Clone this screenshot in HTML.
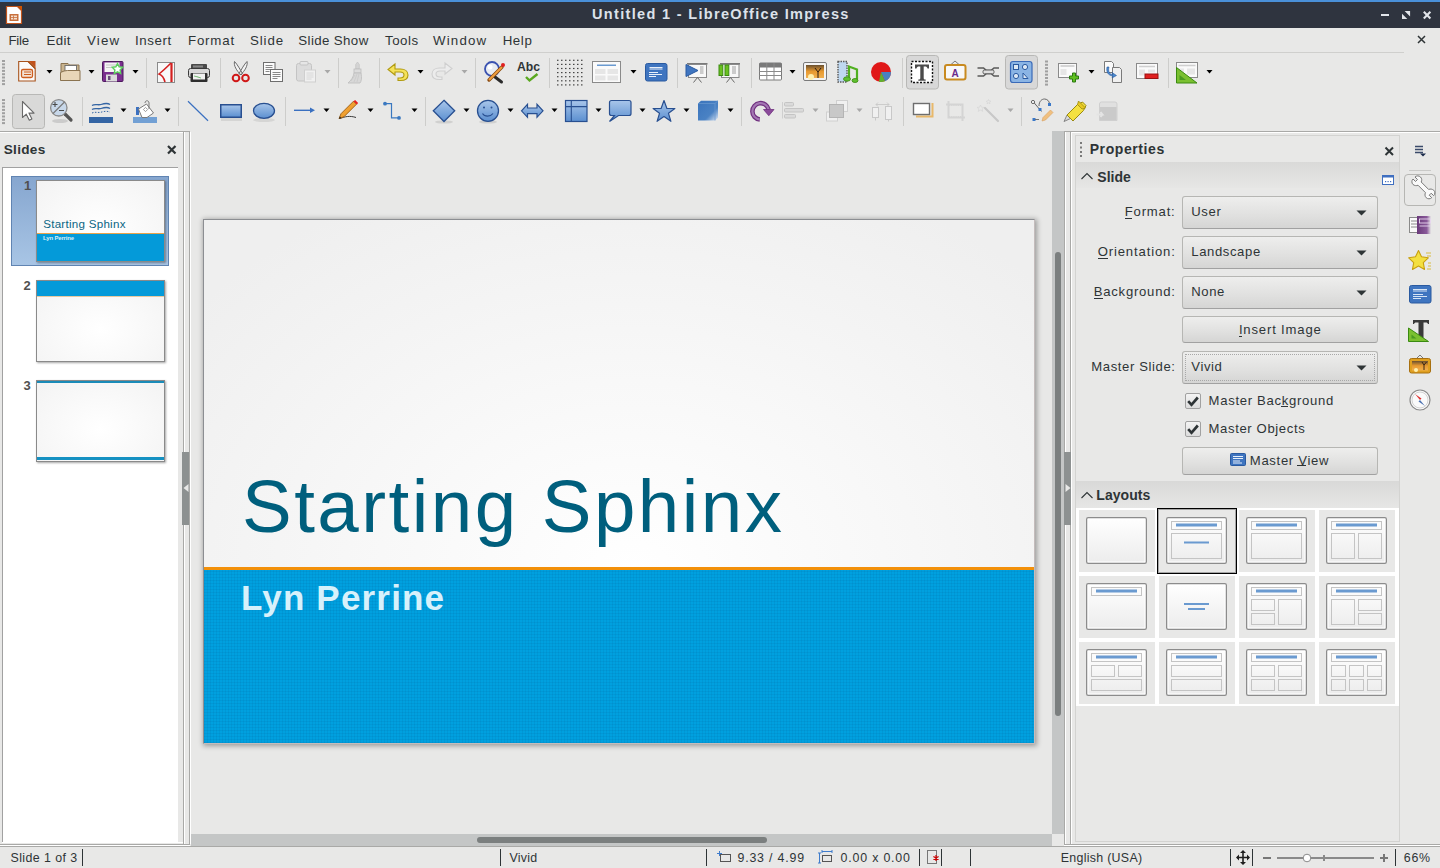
<!DOCTYPE html>
<html><head><meta charset="utf-8">
<style>
*{box-sizing:border-box;margin:0;padding:0}
html,body{width:1440px;height:868px;overflow:hidden;background:#e8e8e7;font-family:"Liberation Sans",sans-serif;color:#2e3436;position:relative}
.a{position:absolute}
.t{position:absolute;white-space:nowrap;line-height:1}
svg{position:absolute;overflow:visible}
</style></head><body>
<div class="a" style="left:0px;top:0px;width:1440px;height:2px;background:#4a90d9"></div>
<div class="a" style="left:0px;top:2px;width:1440px;height:26px;background:#2f343f"></div>
<svg style="left:0;top:0" width="30" height="30"><path d="M6.5 6.5h11l4 4v13h-15z" fill="#fff" stroke="#c1541c" stroke-width="1.2"/><path d="M17.5 6h4.5v4.5z" fill="#d35400"/><rect x="9.5" y="14" width="9" height="7" fill="#c8703d"/><rect x="11" y="15.5" width="6" height="4" fill="#f5e0d0"/><path d="M13.5 15.5v4M11 17.5h6" stroke="#c8703d" stroke-width=".8"/></svg>
<div class="t" style="left:592.00px;top:7.22px;font-size:14.5px;font-weight:bold;color:#dde2ea;letter-spacing:1.33px">Untitled 1 - LibreOffice Impress</div>
<svg style="left:0;top:0" width="1440" height="30">
<rect x="1381" y="14" width="8" height="2" fill="#e2e5ea"/>
<path d="M1404.6 11h5.5v5.5z M1402 13.8l5.3 5.2h-5.3z" fill="#e2e5ea"/>
<path d="M1423.8 11.8l6.6 6.6M1430.4 11.8l-6.6 6.6" stroke="#e2e5ea" stroke-width="2.1"/>
</svg>
<div class="t" style="left:8.50px;top:33.74px;font-size:13.3px;letter-spacing:-0.29px">File</div>
<div class="t" style="left:46.50px;top:33.74px;font-size:13.3px;letter-spacing:0.38px">Edit</div>
<div class="t" style="left:87.00px;top:33.74px;font-size:13.3px;letter-spacing:1.17px">View</div>
<div class="t" style="left:135.00px;top:33.74px;font-size:13.3px;letter-spacing:0.57px">Insert</div>
<div class="t" style="left:188.00px;top:33.74px;font-size:13.3px;letter-spacing:0.80px">Format</div>
<div class="t" style="left:250.00px;top:33.74px;font-size:13.3px;letter-spacing:0.88px">Slide</div>
<div class="t" style="left:298.30px;top:33.74px;font-size:13.3px;letter-spacing:0.38px">Slide Show</div>
<div class="t" style="left:385.00px;top:33.74px;font-size:13.3px;letter-spacing:0.53px">Tools</div>
<div class="t" style="left:433.00px;top:33.74px;font-size:13.3px;letter-spacing:1.18px">Window</div>
<div class="t" style="left:502.70px;top:33.74px;font-size:13.3px;letter-spacing:0.58px">Help</div>
<svg style="left:1415px;top:33px" width="14" height="14"><path d="M3 3l7 7M10 3l-7 7" stroke="#2e3436" stroke-width="1.5"/></svg>
<div class="a" style="left:0px;top:52px;width:1404px;height:1px;background:#cfcfcd"></div>
<div class="a" style="left:0px;top:131px;width:190px;height:1px;background:#a9a9a7"></div>
<div class="a" style="left:0px;top:132px;width:183px;height:1px;background:#ffffff"></div>
<div class="a" style="left:1064px;top:131px;width:1375px;height:1px;background:#a9a9a7"></div>
<div class="a" style="left:1071px;top:132px;width:1368px;height:1px;background:#ffffff"></div>
<div class="t" style="left:3.70px;top:142.99px;font-size:13.6px;font-weight:bold;letter-spacing:0.31px">Slides</div>
<svg style="left:163.5px;top:141.5px" width="16" height="16"><path d="M4 4l7.5 7.5M11.5 4l-7.5 7.5" stroke="#2e3436" stroke-width="2.2"/></svg>
<div class="a" style="left:2px;top:167px;width:176px;height:675px;background:#fff;border-top:1px solid #a1a1a1;border-left:1px solid #a1a1a1"></div>
<div class="a" style="left:2px;top:842px;width:182px;height:1px;background:#ffffff"></div>
<div class="a" style="left:0px;top:844px;width:190px;height:1px;background:#a9a9a7"></div>
<div class="a" style="left:183px;top:131px;width:1px;height:714px;background:#a9a9a7"></div>
<div class="a" style="left:189px;top:131px;width:1px;height:714px;background:#a9a9a7"></div>
<div class="a" style="left:184px;top:132px;width:1px;height:712px;background:#fff"></div>
<div class="a" style="left:190px;top:132px;width:1px;height:712px;background:#fff"></div>
<div class="a" style="left:182px;top:452px;width:7px;height:73px;background:#8d9191"></div>
<svg style="left:182px;top:482px" width="8" height="12"><path d="M1.5 6l5-4v8z" fill="#e8e8e7"/></svg>
<div class="a" style="left:11px;top:176px;width:158px;height:90px;background:linear-gradient(to bottom,#86a6cf,#a8c5e5);border:1px solid #6084b2"></div>
<div class="a" style="left:36px;top:180px;width:129px;height:82px;border:1px solid #8a8a8a;box-shadow:1px 1px 2px rgba(0,0,0,.35);background:radial-gradient(ellipse at 50% 60%,#ffffff,#f3f3f3);overflow:hidden">
<div class="a" style="left:0;top:52px;width:127px;height:1px;background:#e8a34a"></div>
<div class="a" style="left:0;top:53px;width:127px;height:27px;background:#049ad9"></div>
</div>
<div class="a" style="left:36px;top:280px;width:129px;height:82px;border:1px solid #8a8a8a;box-shadow:1px 1px 2px rgba(0,0,0,.35);background:radial-gradient(ellipse at 50% 60%,#ffffff,#f3f3f3);overflow:hidden">
<div class="a" style="left:0;top:0;width:127px;height:15px;background:#049ad9"></div>
<div class="a" style="left:0;top:15px;width:127px;height:1px;background:#e8c9a0"></div>
</div>
<div class="a" style="left:36px;top:380px;width:129px;height:82px;border:1px solid #8a8a8a;box-shadow:1px 1px 2px rgba(0,0,0,.35);background:radial-gradient(ellipse at 50% 60%,#ffffff,#f3f3f3);overflow:hidden">
<div class="a" style="left:0;top:0;width:127px;height:2px;background:#1a8bb8"></div>
<div class="a" style="left:0;top:76px;width:127px;height:3px;background:#1591c2"></div>
</div>
<div class="t" style="left:43.20px;top:218.18px;font-size:11.6px;color:#0a6584;letter-spacing:0.26px">Starting Sphinx</div>
<div class="t" style="left:43.00px;top:234.92px;font-size:6px;font-weight:bold;color:#d8f0fa;letter-spacing:-0.17px">Lyn Perrine</div>
<div class="t" style="left:24.00px;top:179.49px;font-size:13px;font-weight:bold;color:#505050">1</div>
<div class="t" style="left:23.50px;top:279.49px;font-size:13px;font-weight:bold;color:#505050">2</div>
<div class="t" style="left:23.50px;top:379.49px;font-size:13px;font-weight:bold;color:#505050">3</div>
<div class="a" style="left:203px;top:219px;width:832px;height:525px;border:1px solid #8c8e92;border-right-color:#c4bcbc;border-bottom-color:#c4bcbc;box-shadow:1px 1px 5px 1px rgba(0,0,0,.33);background:radial-gradient(ellipse 560px 420px at 428px 350px,#ffffff 0%,#f8f8f8 45%,#efefef 100%);overflow:hidden">
<div class="a" style="left:0;top:347px;width:830px;height:3px;background:#f2900a"></div>
<div class="a" style="left:0;top:350px;width:830px;height:173px;background:#00a0df;background-image:repeating-linear-gradient(90deg,rgba(0,50,100,.07) 0 1px,transparent 1px 3px),repeating-linear-gradient(0deg,rgba(0,50,100,.07) 0 1px,transparent 1px 3px)"></div>
</div>
<div class="t" style="left:242.00px;top:469.53px;font-size:74.5px;color:#005f7d;letter-spacing:2.48px">Starting Sphinx</div>
<div class="t" style="left:241.00px;top:579.97px;font-size:35px;font-weight:bold;color:#d7f1fb;letter-spacing:1.18px">Lyn Perrine</div>
<div class="a" style="left:191px;top:834px;width:861px;height:12px;background:#c4c6c6"></div>
<div class="a" style="left:477px;top:837px;width:290px;height:6px;background:#7b7f7f;border-radius:3px"></div>
<div class="a" style="left:1052px;top:834px;width:12px;height:12px;background:#e8e8e7"></div>
<div class="a" style="left:0px;top:846px;width:1440px;height:1px;background:#a9a9a7"></div>
<div class="a" style="left:1052px;top:131px;width:12px;height:703px;background:#c4c6c6"></div>
<div class="a" style="left:1055px;top:252px;width:6px;height:464px;background:#7b7f7f;border-radius:3px"></div>
<div class="a" style="left:1064px;top:131px;width:1px;height:714px;background:#a9a9a7"></div>
<div class="a" style="left:1070px;top:131px;width:1px;height:714px;background:#a9a9a7"></div>
<div class="a" style="left:1065px;top:132px;width:1px;height:712px;background:#fff"></div>
<div class="a" style="left:1064px;top:452px;width:7px;height:73px;background:#8d9191"></div>
<svg style="left:1064px;top:482px" width="8" height="12"><path d="M6.5 6l-5-4v8z" fill="#e8e8e7"/></svg>
<div class="a" style="left:1071px;top:132px;width:1px;height:712px;background:#fff"></div>
<div class="a" style="left:1064px;top:844px;width:376px;height:1px;background:#a9a9a7"></div>
<div class="a" style="left:1064px;top:845px;width:376px;height:1px;background:#ffffff"></div>
<div class="a" style="left:0px;top:845px;width:190px;height:1px;background:#ffffff"></div>
<div class="a" style="left:1075px;top:135px;width:325px;height:707px;border:1px solid #d3d3d1;border-bottom:1px solid #d3d3d1"></div>
<svg style="left:1079px;top:141px" width="6" height="18"><g fill="#7a7a7a"><rect x="1" y="1" width="2" height="2"/><rect x="1" y="5.5" width="2" height="2"/><rect x="1" y="10" width="2" height="2"/><rect x="1" y="14" width="2" height="2"/></g></svg>
<div class="t" style="left:1089.70px;top:142.35px;font-size:14px;font-weight:bold;letter-spacing:0.59px">Properties</div>
<svg style="left:1382px;top:144px" width="16" height="16"><path d="M3.5 3.5l7.5 7.5M11 3.5l-7.5 7.5" stroke="#2e3436" stroke-width="2"/></svg>
<div class="a" style="left:1076px;top:162px;width:323px;height:26px;background:linear-gradient(to bottom,#d9d9d8,#e6e6e5)"></div>
<svg style="left:1078.5px;top:167.5px" width="18" height="18"><path d="M2.5 11l5.5-5.5 5.5 5.5" fill="none" stroke="#2e3436" stroke-width="1.1"/></svg>
<div class="t" style="left:1097.30px;top:169.75px;font-size:14px;font-weight:bold">Slide</div>
<svg style="left:1382px;top:175px" width="14" height="11"><rect x=".5" y=".5" width="11" height="9" fill="#fff" stroke="#3f6fc0"/><rect x=".5" y=".5" width="11" height="2" fill="#3f6fc0"/><g fill="#3f6fc0"><rect x="3" y="6" width="1.2" height="1.2"/><rect x="5.5" y="6" width="1.2" height="1.2"/><rect x="8" y="6" width="1.2" height="1.2"/></g></svg>
<div class="a" style="left:1182px;top:196px;width:196px;height:33px;border:1px solid #b6b6b3;border-bottom-color:#a1a1a1;border-radius:3px;background:linear-gradient(to bottom,#eeeeed,#e0e0df 60%,#d5d5d4)"></div>
<div class="t" style="left:1191.30px;top:205.41px;font-size:13.1px;letter-spacing:0.60px">User</div>
<svg style="left:1356px;top:210px" width="12" height="6"><path d="M0.5 .5h10l-5 5z" fill="#2e3436"/></svg>
<div class="t" style="left:1124.80px;top:204.81px;font-size:13.1px;letter-spacing:0.81px">Format:</div>
<div class="a" style="left:1182px;top:236px;width:196px;height:33px;border:1px solid #b6b6b3;border-bottom-color:#a1a1a1;border-radius:3px;background:linear-gradient(to bottom,#eeeeed,#e0e0df 60%,#d5d5d4)"></div>
<div class="t" style="left:1191.30px;top:245.41px;font-size:13.1px;letter-spacing:0.60px">Landscape</div>
<svg style="left:1356px;top:250px" width="12" height="6"><path d="M0.5 .5h10l-5 5z" fill="#2e3436"/></svg>
<div class="t" style="left:1097.70px;top:244.81px;font-size:13.1px;letter-spacing:0.86px">Orientation:</div>
<div class="a" style="left:1182px;top:276px;width:196px;height:33px;border:1px solid #b6b6b3;border-bottom-color:#a1a1a1;border-radius:3px;background:linear-gradient(to bottom,#eeeeed,#e0e0df 60%,#d5d5d4)"></div>
<div class="t" style="left:1191.30px;top:285.41px;font-size:13.1px;letter-spacing:0.60px">None</div>
<svg style="left:1356px;top:290px" width="12" height="6"><path d="M0.5 .5h10l-5 5z" fill="#2e3436"/></svg>
<div class="t" style="left:1093.70px;top:284.81px;font-size:13.1px;letter-spacing:0.77px">Background:</div>
<div class="a" style="left:1182px;top:316px;width:196px;height:27px;border:1px solid #b6b6b3;border-bottom-color:#a1a1a1;border-radius:3px;background:linear-gradient(to bottom,#eeeeed,#e0e0df 60%,#d5d5d4)"></div>
<div class="t" style="left:1238.90px;top:322.91px;font-size:13.1px;letter-spacing:0.83px">Insert Image</div>
<div class="a" style="left:1182px;top:351px;width:196px;height:33px;border:1px solid #b6b6b3;border-bottom-color:#a1a1a1;border-radius:3px;background:linear-gradient(to bottom,#eeeeed,#e0e0df 60%,#d5d5d4)"></div>
<div class="a" style="left:1185px;top:354px;width:190px;height:27px;border:1px dotted #a8a8a8"></div>
<div class="t" style="left:1191.30px;top:360.41px;font-size:13.1px;letter-spacing:0.60px">Vivid</div>
<svg style="left:1356px;top:365px" width="12" height="6"><path d="M0.5 .5h10l-5 5z" fill="#2e3436"/></svg>
<div class="t" style="left:1091.30px;top:359.71px;font-size:13.1px;letter-spacing:0.60px">Master Slide:</div>
<div class="a" style="left:1185px;top:393px;width:16px;height:16px;border:1px solid #a1a1a1;border-radius:2px;background:linear-gradient(to bottom,#f4f4f4,#dcdcdc)"></div>
<svg style="left:1185px;top:393px" width="16" height="16"><path d="M3.2 8.2l3.3 3.6 6.3-7.3" fill="none" stroke="#2e3436" stroke-width="2.7"/></svg>
<div class="t" style="left:1208.60px;top:394.41px;font-size:13.1px;letter-spacing:0.69px">Master Background</div>
<div class="a" style="left:1185px;top:421px;width:16px;height:16px;border:1px solid #a1a1a1;border-radius:2px;background:linear-gradient(to bottom,#f4f4f4,#dcdcdc)"></div>
<svg style="left:1185px;top:421px" width="16" height="16"><path d="M3.2 8.2l3.3 3.6 6.3-7.3" fill="none" stroke="#2e3436" stroke-width="2.7"/></svg>
<div class="t" style="left:1208.60px;top:422.41px;font-size:13.1px;letter-spacing:0.62px">Master Objects</div>
<div class="a" style="left:1182px;top:447px;width:196px;height:28px;border:1px solid #b6b6b3;border-bottom-color:#a1a1a1;border-radius:3px;background:linear-gradient(to bottom,#eeeeed,#e0e0df 60%,#d5d5d4)"></div>
<svg style="left:1230px;top:453px" width="17" height="14"><rect x=".5" y=".5" width="15" height="12" rx="1" fill="#3f75c0" stroke="#2a5aa0"/><path d="M3 3.5h10M3 5.5h10M3 8h7M3 10h9" stroke="#e8f0fa" stroke-width="1"/></svg>
<div class="t" style="left:1249.80px;top:453.91px;font-size:13.1px;letter-spacing:0.68px">Master View</div>
<div class="a" style="left:1076px;top:481px;width:323px;height:27px;background:linear-gradient(to bottom,#d9d9d8,#e6e6e5)"></div>
<svg style="left:1078.5px;top:486.5px" width="18" height="18"><path d="M2.5 11l5.5-5.5 5.5 5.5" fill="none" stroke="#2e3436" stroke-width="1.1"/></svg>
<div class="t" style="left:1096.30px;top:487.85px;font-size:14px;font-weight:bold;letter-spacing:0.05px">Layouts</div>
<div class="a" style="left:1076px;top:508px;width:323px;height:198px;background:#ffffff"></div>
<div class="a" style="left:1079px;top:510px;width:76px;height:62px;background:#e8e8e7"></div>
<svg style="left:1086px;top:517px" width="62" height="48"><defs><linearGradient id="g" x1="0" y1="0" x2="0" y2="1"><stop offset="0" stop-color="#ffffff"/><stop offset="1" stop-color="#ececec"/></linearGradient></defs><rect x=".75" y=".75" width="59.5" height="45.5" rx="1.5" fill="url(#g)" stroke="#8c8c8c" stroke-width="1.5"/><rect x="2" y="2" width="57" height="43" fill="none" stroke="#fff" stroke-width="1"/></svg>
<div class="a" style="left:1159px;top:510px;width:76px;height:62px;background:#e8e8e7"></div>
<svg style="left:1166px;top:517px" width="62" height="48"><defs><linearGradient id="g" x1="0" y1="0" x2="0" y2="1"><stop offset="0" stop-color="#ffffff"/><stop offset="1" stop-color="#ececec"/></linearGradient></defs><rect x=".75" y=".75" width="59.5" height="45.5" rx="1.5" fill="url(#g)" stroke="#8c8c8c" stroke-width="1.5"/><rect x="2" y="2" width="57" height="43" fill="none" stroke="#fff" stroke-width="1"/><rect x="5.5" y="4.5" width="50" height="8" fill="#fbfbfb" stroke="#c4c4c4"/><rect x="10" y="6.5" width="41" height="3" fill="#6a9ad0"/><rect x="5.5" y="16.5" width="50" height="25" fill="none" stroke="#c4c4c4"/><rect x="18" y="24.5" width="25" height="2" fill="#6a9ad0"/></svg>
<div class="a" style="left:1239px;top:510px;width:76px;height:62px;background:#e8e8e7"></div>
<svg style="left:1246px;top:517px" width="62" height="48"><defs><linearGradient id="g" x1="0" y1="0" x2="0" y2="1"><stop offset="0" stop-color="#ffffff"/><stop offset="1" stop-color="#ececec"/></linearGradient></defs><rect x=".75" y=".75" width="59.5" height="45.5" rx="1.5" fill="url(#g)" stroke="#8c8c8c" stroke-width="1.5"/><rect x="2" y="2" width="57" height="43" fill="none" stroke="#fff" stroke-width="1"/><rect x="5.5" y="4.5" width="50" height="8" fill="#fbfbfb" stroke="#c4c4c4"/><rect x="10" y="6.5" width="41" height="3" fill="#6a9ad0"/><rect x="5.5" y="16.5" width="50" height="25" fill="none" stroke="#c4c4c4"/></svg>
<div class="a" style="left:1319px;top:510px;width:76px;height:62px;background:#e8e8e7"></div>
<svg style="left:1326px;top:517px" width="62" height="48"><defs><linearGradient id="g" x1="0" y1="0" x2="0" y2="1"><stop offset="0" stop-color="#ffffff"/><stop offset="1" stop-color="#ececec"/></linearGradient></defs><rect x=".75" y=".75" width="59.5" height="45.5" rx="1.5" fill="url(#g)" stroke="#8c8c8c" stroke-width="1.5"/><rect x="2" y="2" width="57" height="43" fill="none" stroke="#fff" stroke-width="1"/><rect x="5.5" y="4.5" width="50" height="8" fill="#fbfbfb" stroke="#c4c4c4"/><rect x="10" y="6.5" width="41" height="3" fill="#6a9ad0"/><rect x="5.5" y="16.5" width="23" height="25" fill="none" stroke="#c4c4c4"/><rect x="32.5" y="16.5" width="23" height="25" fill="none" stroke="#c4c4c4"/></svg>
<div class="a" style="left:1079px;top:576px;width:76px;height:62px;background:#e8e8e7"></div>
<svg style="left:1086px;top:583px" width="62" height="48"><defs><linearGradient id="g" x1="0" y1="0" x2="0" y2="1"><stop offset="0" stop-color="#ffffff"/><stop offset="1" stop-color="#ececec"/></linearGradient></defs><rect x=".75" y=".75" width="59.5" height="45.5" rx="1.5" fill="url(#g)" stroke="#8c8c8c" stroke-width="1.5"/><rect x="2" y="2" width="57" height="43" fill="none" stroke="#fff" stroke-width="1"/><rect x="5.5" y="4.5" width="50" height="8" fill="#fbfbfb" stroke="#c4c4c4"/><rect x="10" y="6.5" width="41" height="3" fill="#6a9ad0"/></svg>
<div class="a" style="left:1159px;top:576px;width:76px;height:62px;background:#e8e8e7"></div>
<svg style="left:1166px;top:583px" width="62" height="48"><defs><linearGradient id="g" x1="0" y1="0" x2="0" y2="1"><stop offset="0" stop-color="#ffffff"/><stop offset="1" stop-color="#ececec"/></linearGradient></defs><rect x=".75" y=".75" width="59.5" height="45.5" rx="1.5" fill="url(#g)" stroke="#8c8c8c" stroke-width="1.5"/><rect x="2" y="2" width="57" height="43" fill="none" stroke="#fff" stroke-width="1"/><rect x="18" y="20" width="25" height="2" fill="#6a9ad0"/><rect x="22" y="25" width="17" height="2" fill="#6a9ad0"/></svg>
<div class="a" style="left:1239px;top:576px;width:76px;height:62px;background:#e8e8e7"></div>
<svg style="left:1246px;top:583px" width="62" height="48"><defs><linearGradient id="g" x1="0" y1="0" x2="0" y2="1"><stop offset="0" stop-color="#ffffff"/><stop offset="1" stop-color="#ececec"/></linearGradient></defs><rect x=".75" y=".75" width="59.5" height="45.5" rx="1.5" fill="url(#g)" stroke="#8c8c8c" stroke-width="1.5"/><rect x="2" y="2" width="57" height="43" fill="none" stroke="#fff" stroke-width="1"/><rect x="5.5" y="4.5" width="50" height="8" fill="#fbfbfb" stroke="#c4c4c4"/><rect x="10" y="6.5" width="41" height="3" fill="#6a9ad0"/><rect x="5.5" y="16.5" width="23" height="11" fill="none" stroke="#c4c4c4"/><rect x="5.5" y="30.5" width="23" height="11" fill="none" stroke="#c4c4c4"/><rect x="32.5" y="16.5" width="23" height="25" fill="none" stroke="#c4c4c4"/></svg>
<div class="a" style="left:1319px;top:576px;width:76px;height:62px;background:#e8e8e7"></div>
<svg style="left:1326px;top:583px" width="62" height="48"><defs><linearGradient id="g" x1="0" y1="0" x2="0" y2="1"><stop offset="0" stop-color="#ffffff"/><stop offset="1" stop-color="#ececec"/></linearGradient></defs><rect x=".75" y=".75" width="59.5" height="45.5" rx="1.5" fill="url(#g)" stroke="#8c8c8c" stroke-width="1.5"/><rect x="2" y="2" width="57" height="43" fill="none" stroke="#fff" stroke-width="1"/><rect x="5.5" y="4.5" width="50" height="8" fill="#fbfbfb" stroke="#c4c4c4"/><rect x="10" y="6.5" width="41" height="3" fill="#6a9ad0"/><rect x="5.5" y="16.5" width="23" height="25" fill="none" stroke="#c4c4c4"/><rect x="32.5" y="16.5" width="23" height="11" fill="none" stroke="#c4c4c4"/><rect x="32.5" y="30.5" width="23" height="11" fill="none" stroke="#c4c4c4"/></svg>
<div class="a" style="left:1079px;top:642px;width:76px;height:62px;background:#e8e8e7"></div>
<svg style="left:1086px;top:649px" width="62" height="48"><defs><linearGradient id="g" x1="0" y1="0" x2="0" y2="1"><stop offset="0" stop-color="#ffffff"/><stop offset="1" stop-color="#ececec"/></linearGradient></defs><rect x=".75" y=".75" width="59.5" height="45.5" rx="1.5" fill="url(#g)" stroke="#8c8c8c" stroke-width="1.5"/><rect x="2" y="2" width="57" height="43" fill="none" stroke="#fff" stroke-width="1"/><rect x="5.5" y="4.5" width="50" height="8" fill="#fbfbfb" stroke="#c4c4c4"/><rect x="10" y="6.5" width="41" height="3" fill="#6a9ad0"/><rect x="5.5" y="16.5" width="23" height="11" fill="none" stroke="#c4c4c4"/><rect x="32.5" y="16.5" width="23" height="11" fill="none" stroke="#c4c4c4"/><rect x="5.5" y="30.5" width="50" height="11" fill="none" stroke="#c4c4c4"/></svg>
<div class="a" style="left:1159px;top:642px;width:76px;height:62px;background:#e8e8e7"></div>
<svg style="left:1166px;top:649px" width="62" height="48"><defs><linearGradient id="g" x1="0" y1="0" x2="0" y2="1"><stop offset="0" stop-color="#ffffff"/><stop offset="1" stop-color="#ececec"/></linearGradient></defs><rect x=".75" y=".75" width="59.5" height="45.5" rx="1.5" fill="url(#g)" stroke="#8c8c8c" stroke-width="1.5"/><rect x="2" y="2" width="57" height="43" fill="none" stroke="#fff" stroke-width="1"/><rect x="5.5" y="4.5" width="50" height="8" fill="#fbfbfb" stroke="#c4c4c4"/><rect x="10" y="6.5" width="41" height="3" fill="#6a9ad0"/><rect x="5.5" y="16.5" width="50" height="11" fill="none" stroke="#c4c4c4"/><rect x="5.5" y="30.5" width="50" height="11" fill="none" stroke="#c4c4c4"/></svg>
<div class="a" style="left:1239px;top:642px;width:76px;height:62px;background:#e8e8e7"></div>
<svg style="left:1246px;top:649px" width="62" height="48"><defs><linearGradient id="g" x1="0" y1="0" x2="0" y2="1"><stop offset="0" stop-color="#ffffff"/><stop offset="1" stop-color="#ececec"/></linearGradient></defs><rect x=".75" y=".75" width="59.5" height="45.5" rx="1.5" fill="url(#g)" stroke="#8c8c8c" stroke-width="1.5"/><rect x="2" y="2" width="57" height="43" fill="none" stroke="#fff" stroke-width="1"/><rect x="5.5" y="4.5" width="50" height="8" fill="#fbfbfb" stroke="#c4c4c4"/><rect x="10" y="6.5" width="41" height="3" fill="#6a9ad0"/><rect x="5.5" y="16.5" width="23" height="11" fill="none" stroke="#c4c4c4"/><rect x="32.5" y="16.5" width="23" height="11" fill="none" stroke="#c4c4c4"/><rect x="5.5" y="30.5" width="23" height="11" fill="none" stroke="#c4c4c4"/><rect x="32.5" y="30.5" width="23" height="11" fill="none" stroke="#c4c4c4"/></svg>
<div class="a" style="left:1319px;top:642px;width:76px;height:62px;background:#e8e8e7"></div>
<svg style="left:1326px;top:649px" width="62" height="48"><defs><linearGradient id="g" x1="0" y1="0" x2="0" y2="1"><stop offset="0" stop-color="#ffffff"/><stop offset="1" stop-color="#ececec"/></linearGradient></defs><rect x=".75" y=".75" width="59.5" height="45.5" rx="1.5" fill="url(#g)" stroke="#8c8c8c" stroke-width="1.5"/><rect x="2" y="2" width="57" height="43" fill="none" stroke="#fff" stroke-width="1"/><rect x="5.5" y="4.5" width="50" height="8" fill="#fbfbfb" stroke="#c4c4c4"/><rect x="10" y="6.5" width="41" height="3" fill="#6a9ad0"/><rect x="5.5" y="16.5" width="14" height="11" fill="none" stroke="#c4c4c4"/><rect x="23.5" y="16.5" width="14" height="11" fill="none" stroke="#c4c4c4"/><rect x="41.5" y="16.5" width="14" height="11" fill="none" stroke="#c4c4c4"/><rect x="5.5" y="30.5" width="14" height="11" fill="none" stroke="#c4c4c4"/><rect x="23.5" y="30.5" width="14" height="11" fill="none" stroke="#c4c4c4"/><rect x="41.5" y="30.5" width="14" height="11" fill="none" stroke="#c4c4c4"/></svg>
<div class="a" style="left:1157px;top:508px;width:80px;height:66px;border:1px solid #000;box-shadow:inset 0 0 0 1px rgba(0,0,0,.35)"></div>
<svg style="left:1413px;top:144px" width="16" height="14"><path d="M2 2.5h8M2 5.5h8M2 8.5h8" stroke="#3a4a6a" stroke-width="1.3"/><path d="M7 9.5h6l-3 3z" fill="#1a2a4a"/></svg>
<div class="a" style="left:1409px;top:170px;width:22px;height:1px;background:#c9c9c7"></div>
<div class="a" style="left:1404px;top:174px;width:32px;height:32px;border:1px solid #b6b6b3;border-radius:4px;background:#e8e8e7"></div>
<div class="a" style="left:1125px;top:218px;width:7px;height:1px;background:#2e3436"></div>
<div class="a" style="left:1098px;top:258px;width:10px;height:1px;background:#2e3436"></div>
<div class="a" style="left:1094px;top:298px;width:9px;height:1px;background:#2e3436"></div>
<div class="a" style="left:1239px;top:336px;width:3px;height:1px;background:#2e3436"></div>
<div class="a" style="left:1281px;top:406px;width:7px;height:1px;background:#2e3436"></div>
<div class="a" style="left:1275px;top:435px;width:2px;height:1px;background:#2e3436"></div>
<div class="a" style="left:1297px;top:465px;width:9px;height:1px;background:#2e3436"></div>
<div class="t" style="left:10.50px;top:851.50px;font-size:12.4px;letter-spacing:0.42px">Slide 1 of 3</div>
<div class="a" style="left:82px;top:849px;width:1px;height:17px;background:#2e3436"></div>
<div class="a" style="left:500px;top:849px;width:1px;height:17px;background:#2e3436"></div>
<div class="a" style="left:706px;top:849px;width:1px;height:17px;background:#2e3436"></div>
<div class="a" style="left:919px;top:849px;width:1px;height:17px;background:#2e3436"></div>
<div class="a" style="left:941px;top:849px;width:1px;height:17px;background:#2e3436"></div>
<div class="a" style="left:970px;top:849px;width:1px;height:17px;background:#2e3436"></div>
<div class="a" style="left:1230px;top:849px;width:1px;height:17px;background:#2e3436"></div>
<div class="a" style="left:1252px;top:849px;width:1px;height:17px;background:#2e3436"></div>
<div class="a" style="left:1395px;top:849px;width:1px;height:17px;background:#2e3436"></div>
<div class="t" style="left:509.50px;top:851.50px;font-size:12.4px;letter-spacing:0.24px">Vivid</div>
<svg style="left:716px;top:850px" width="16" height="14"><path d="M1 3.5h5M3.5 1v5" stroke="#3f7ccc" stroke-width="1"/><rect x="4.5" y="4.5" width="10" height="7" fill="none" stroke="#555"/></svg>
<div class="t" style="left:737.50px;top:851.50px;font-size:12.4px;letter-spacing:0.80px">9.33 / 4.99</div>
<svg style="left:818px;top:849px" width="16" height="16"><path d="M1.5 4v10M0 4h3M0 14h3M4 2.5h10M4 1v3M14 1v3" stroke="#3f7ccc" stroke-width="1"/><rect x="4.5" y="6.5" width="9" height="6" fill="none" stroke="#555"/></svg>
<div class="t" style="left:840.60px;top:851.50px;font-size:12.4px;letter-spacing:0.80px">0.00 x 0.00</div>
<svg style="left:926px;top:850px" width="14" height="16"><rect x="1.5" y=".5" width="9" height="13" fill="none" stroke="#777"/><path d="M10 5v6M7.4 6.5l5.2 3M7.4 9.5l5.2-3" stroke="#c00" stroke-width="1.2"/></svg>
<div class="t" style="left:1060.70px;top:851.50px;font-size:12.4px;letter-spacing:0.30px">English (USA)</div>
<svg style="left:1236px;top:850px" width="15" height="15"><path d="M7 1.5v12M1 7.5h12" stroke="#1e1e1e" stroke-width="1.6"/><path d="M7 0l-3 3h6zM7 15l-3-3h6zM0 7.5l3-3v6zM14 7.5l-3-3v6z" fill="#1e1e1e"/></svg>
<div class="a" style="left:1263px;top:857px;width:8px;height:2px;background:#777"></div>
<div class="a" style="left:1277px;top:857px;width:97px;height:2px;background:#8a8a8a"></div>
<div class="a" style="left:1323px;top:855px;width:2px;height:6px;background:#8a8a8a"></div>
<svg style="left:1302px;top:853px" width="10" height="10"><circle cx="5" cy="5" r="3.8" fill="#fff" stroke="#8a8a8a" stroke-width="1"/></svg>
<div class="a" style="left:1380px;top:857px;width:8px;height:2px;background:#777"></div>
<div class="a" style="left:1383px;top:854px;width:2px;height:8px;background:#777"></div>
<div class="t" style="left:1403.70px;top:851.50px;font-size:12.4px;letter-spacing:0.82px">66%</div>
<svg style="left:0;top:0" width="1440" height="140"><rect x="2" y="60" width="3" height="2" fill="#a0a0a0"/><rect x="2" y="63.3" width="3" height="2" fill="#a0a0a0"/><rect x="2" y="66.6" width="3" height="2" fill="#a0a0a0"/><rect x="2" y="69.89999999999999" width="3" height="2" fill="#a0a0a0"/><rect x="2" y="73.19999999999999" width="3" height="2" fill="#a0a0a0"/><rect x="2" y="76.49999999999999" width="3" height="2" fill="#a0a0a0"/><rect x="2" y="79.79999999999998" width="3" height="2" fill="#a0a0a0"/><rect x="2" y="83.09999999999998" width="3" height="2" fill="#a0a0a0"/><path d="M18.7 61.5h9.5l7 7v12.5h-16.5z" fill="#fbfbfb" stroke="#a8531c" stroke-width="1.1"/><path d="M28.5 61h7v7z" fill="#c2521b"/><path d="M28.2 61.5l7 7" stroke="#a8531c" stroke-width="1.2"/><rect x="21.5" y="69.5" width="11" height="8" rx="1.5" fill="#f3e2d5" stroke="#cd5d1e" stroke-width="1.3"/><path d="M24 72h7M24 74.5h7" stroke="#cd5d1e" stroke-width="1"/><path d="M46.5 70h6l-3 3.5z" fill="#000"/><path d="M61 63.5h7l1.5 1.5h9.5v15.5h-18z" fill="#c9b48f" stroke="#8a7350" stroke-width="1"/><rect x="65" y="65.5" width="11.5" height="6" fill="#fff" stroke="#6a6a6a" stroke-width=".9"/><path d="M60.5 72.5l3.5-1.5 3.5-.5h12.5v10h-19.5z" fill="#e8d6b8" stroke="#8a7350" stroke-width="1"/><path d="M88.5 70h6l-3 3.5z" fill="#000"/><rect x="102.5" y="61.5" width="20.5" height="20" rx="1" fill="#7a2f8e" stroke="#4d1a5e" stroke-width="1"/><rect x="104.5" y="62.5" width="15" height="9.5" fill="#f4f4f4"/><path d="M106 65h11M106 67.5h11" stroke="#bbb" stroke-width=".8"/><rect x="106" y="74.5" width="11" height="7" fill="#dcdcdc"/><rect x="108" y="76" width="2.5" height="4" fill="#6a4a7a"/><path d="M117.5 63.5l1.6 3.3 3.6.5-2.6 2.6.6 3.6-3.2-1.7-3.2 1.7.6-3.6-2.6-2.6 3.6-.5z" fill="#fff" stroke="#5ccf5c" stroke-width="1.4"/><path d="M132.5 70h6l-3 3.5z" fill="#000"/><rect x="146" y="58" width="1" height="30" fill="#cdcdcb"/><rect x="157.5" y="62.5" width="17" height="20" fill="#f8f8f8" stroke="#8a8a8a" stroke-width="1"/><path d="M171 63c-3 3-7 7-12 11 3 1 5 4 6 8" fill="none" stroke="#d42020" stroke-width="1.6"/><path d="M171.5 63v19" stroke="#d42020" stroke-width="2.2"/><rect x="191" y="64" width="16" height="5" rx="1" fill="#4a4a4a"/><rect x="193" y="65.5" width="10" height="2" fill="#888"/><rect x="188.5" y="68.5" width="21" height="9" rx="2" fill="#d8d8d8" stroke="#3a3a3a" stroke-width="1"/><rect x="190.5" y="73" width="17" height="9" rx="1" fill="#2e2e2e"/><rect x="193" y="73.5" width="12" height="6" fill="#f0f0f0"/><path d="M194 76l4 1 3 1" stroke="#7ac07a" stroke-width="1"/><rect x="220" y="58" width="1" height="30" fill="#cdcdcb"/><path d="M234.5 61.5c-1 4 2 9 6.5 13.5l1.5-1.5c-2.5-4-5-9-8-12zM247 61.5c1 4-2 9-6.5 13.5l-1.5-1.5c2.5-4 5-9 8-12z" fill="#f4f4f4" stroke="#6a6a6a" stroke-width="1"/><circle cx="236" cy="78" r="3.3" fill="none" stroke="#d01818" stroke-width="2"/><circle cx="245.5" cy="78" r="3.3" fill="none" stroke="#d01818" stroke-width="2"/><rect x="263.5" y="62.5" width="11.5" height="12" fill="#fbfbfb" stroke="#6e6e6e" stroke-width="1"/><path d="M265.5 65.5h7M265.5 67.5h7M265.5 69.5h7M265.5 71.5h4" stroke="#7a7a7a" stroke-width=".9"/><rect x="270.5" y="69.5" width="12" height="12" fill="#fbfbfb" stroke="#6e6e6e" stroke-width="1"/><path d="M272.5 72.5h8M272.5 74.5h8M272.5 76.5h8M272.5 78.5h5" stroke="#7a7a7a" stroke-width=".9"/><rect x="296.5" y="63.5" width="15" height="17.5" rx="2" fill="#dcdcdc" stroke="#c4c4c4" stroke-width="1"/><rect x="300" y="61.5" width="8" height="3.5" rx="1" fill="#e6e6e6" stroke="#c4c4c4" stroke-width="1"/><rect x="304.5" y="70" width="11" height="12" fill="#f0f0f0" stroke="#cfcfcf" stroke-width="1"/><path d="M306.5 73h7M306.5 75h7M306.5 77h7M306.5 79h5" stroke="#d4d4d4" stroke-width=".9"/><path d="M324.5 70h6l-3 3.5z" fill="#a8a8a8"/><rect x="338" y="58" width="1" height="30" fill="#cdcdcb"/><path d="M357.5 62l1.8 2.5v4.5h-3.6v-4.5z" fill="#d4d4d4" stroke="#bdbdbd" stroke-width=".6"/><rect x="354" y="69" width="7" height="4" fill="#dcdcdc" stroke="#bdbdbd" stroke-width=".8"/><path d="M354 73c-.5 4-3 7.5-6 10h12c1.5-2 2-5 1-10z" fill="#d8d8d8" stroke="#bdbdbd" stroke-width=".8"/><path d="M351 81l4-6M354 82l3-8M357 82l2-8" stroke="#c4c4c4" stroke-width=".6"/><rect x="379" y="58" width="1" height="30" fill="#cdcdcb"/><path d="M395 64l-7 5.5 7 5.5v-3h5c3 0 4 1 4 3s-1.5 3-4 3h-2v2.5h2.5c4.5 0 7.5-2 7.5-5.5s-3-6-7.5-6h-5.5z" fill="#f5e25a" stroke="#b09a10" stroke-width="1.1"/><path d="M417.5 70h6l-3 3.5z" fill="#000"/><path d="M395 64l-7 5.5 7 5.5v-3h5c3 0 4 1 4 3s-1.5 3-4 3h-2v2.5h2.5c4.5 0 7.5-2 7.5-5.5s-3-6-7.5-6h-5.5z" transform="translate(840 -1) scale(-1 1)" fill="#ececec" stroke="#cfcfcf" stroke-width="1.1"/><path d="M461.5 70h6l-3 3.5z" fill="#a8a8a8"/><rect x="475" y="58" width="1" height="30" fill="#cdcdcb"/><path d="M495 77l6.5 5" stroke="#2a2a2a" stroke-width="3" stroke-linecap="round"/><circle cx="492" cy="69" r="7" fill="#e8ecf2" stroke="#3a52b0" stroke-width="1.8"/><circle cx="490" cy="67" r="2.5" fill="#fff"/><path d="M489 80l13-13" stroke="#8a4a10" stroke-width="3.4" stroke-linecap="round"/><path d="M489 80l13-13" stroke="#f0a040" stroke-width="2"/><circle cx="503" cy="65" r="2" fill="#e02020"/><text x="517" y="71" font-family="Liberation Sans" font-weight="bold" font-size="12.5" fill="#2e3436" textLength="23" lengthAdjust="spacingAndGlyphs">Abc</text><path d="M526 77l3.5 3.5 8-6.5" fill="none" stroke="#5aa820" stroke-width="2.4"/><rect x="549" y="58" width="1" height="30" fill="#cdcdcb"/><rect x="557.2" y="59.7" width="1.2" height="1.2" fill="#1e1e1e"/><rect x="557.2" y="63.800000000000004" width="1.2" height="1.2" fill="#1e1e1e"/><rect x="557.2" y="67.9" width="1.2" height="1.2" fill="#1e1e1e"/><rect x="557.2" y="72.0" width="1.2" height="1.2" fill="#1e1e1e"/><rect x="557.2" y="76.1" width="1.2" height="1.2" fill="#1e1e1e"/><rect x="557.2" y="80.2" width="1.2" height="1.2" fill="#1e1e1e"/><rect x="557.2" y="84.3" width="1.2" height="1.2" fill="#1e1e1e"/><rect x="561.2" y="59.7" width="1.2" height="1.2" fill="#1e1e1e"/><rect x="561.2" y="63.800000000000004" width="1.2" height="1.2" fill="#1e1e1e"/><rect x="561.2" y="67.9" width="1.2" height="1.2" fill="#1e1e1e"/><rect x="561.2" y="72.0" width="1.2" height="1.2" fill="#1e1e1e"/><rect x="561.2" y="76.1" width="1.2" height="1.2" fill="#1e1e1e"/><rect x="561.2" y="80.2" width="1.2" height="1.2" fill="#1e1e1e"/><rect x="561.2" y="84.3" width="1.2" height="1.2" fill="#1e1e1e"/><rect x="565.2" y="59.7" width="1.2" height="1.2" fill="#1e1e1e"/><rect x="565.2" y="63.800000000000004" width="1.2" height="1.2" fill="#1e1e1e"/><rect x="565.2" y="67.9" width="1.2" height="1.2" fill="#1e1e1e"/><rect x="565.2" y="72.0" width="1.2" height="1.2" fill="#1e1e1e"/><rect x="565.2" y="76.1" width="1.2" height="1.2" fill="#1e1e1e"/><rect x="565.2" y="80.2" width="1.2" height="1.2" fill="#1e1e1e"/><rect x="565.2" y="84.3" width="1.2" height="1.2" fill="#1e1e1e"/><rect x="569.2" y="59.7" width="1.2" height="1.2" fill="#1e1e1e"/><rect x="569.2" y="63.800000000000004" width="1.2" height="1.2" fill="#1e1e1e"/><rect x="569.2" y="67.9" width="1.2" height="1.2" fill="#1e1e1e"/><rect x="569.2" y="72.0" width="1.2" height="1.2" fill="#1e1e1e"/><rect x="569.2" y="76.1" width="1.2" height="1.2" fill="#1e1e1e"/><rect x="569.2" y="80.2" width="1.2" height="1.2" fill="#1e1e1e"/><rect x="569.2" y="84.3" width="1.2" height="1.2" fill="#1e1e1e"/><rect x="573.2" y="59.7" width="1.2" height="1.2" fill="#1e1e1e"/><rect x="573.2" y="63.800000000000004" width="1.2" height="1.2" fill="#1e1e1e"/><rect x="573.2" y="67.9" width="1.2" height="1.2" fill="#1e1e1e"/><rect x="573.2" y="72.0" width="1.2" height="1.2" fill="#1e1e1e"/><rect x="573.2" y="76.1" width="1.2" height="1.2" fill="#1e1e1e"/><rect x="573.2" y="80.2" width="1.2" height="1.2" fill="#1e1e1e"/><rect x="573.2" y="84.3" width="1.2" height="1.2" fill="#1e1e1e"/><rect x="577.2" y="59.7" width="1.2" height="1.2" fill="#1e1e1e"/><rect x="577.2" y="63.800000000000004" width="1.2" height="1.2" fill="#1e1e1e"/><rect x="577.2" y="67.9" width="1.2" height="1.2" fill="#1e1e1e"/><rect x="577.2" y="72.0" width="1.2" height="1.2" fill="#1e1e1e"/><rect x="577.2" y="76.1" width="1.2" height="1.2" fill="#1e1e1e"/><rect x="577.2" y="80.2" width="1.2" height="1.2" fill="#1e1e1e"/><rect x="577.2" y="84.3" width="1.2" height="1.2" fill="#1e1e1e"/><rect x="581.2" y="59.7" width="1.2" height="1.2" fill="#1e1e1e"/><rect x="581.2" y="63.800000000000004" width="1.2" height="1.2" fill="#1e1e1e"/><rect x="581.2" y="67.9" width="1.2" height="1.2" fill="#1e1e1e"/><rect x="581.2" y="72.0" width="1.2" height="1.2" fill="#1e1e1e"/><rect x="581.2" y="76.1" width="1.2" height="1.2" fill="#1e1e1e"/><rect x="581.2" y="80.2" width="1.2" height="1.2" fill="#1e1e1e"/><rect x="581.2" y="84.3" width="1.2" height="1.2" fill="#1e1e1e"/><rect x="592.5" y="61.5" width="28" height="21" fill="#fafafa" stroke="#8a8a8a" stroke-width="1"/><rect x="597" y="64.5" width="19" height="1.5" fill="#6a9ad0"/><g fill="#e6e6e6"><rect x="595" y="69" width="10.5" height="5"/><rect x="607.5" y="69" width="10.5" height="5"/><rect x="595" y="75.5" width="10.5" height="5"/><rect x="607.5" y="75.5" width="10.5" height="5"/></g><path d="M630.5 70h6l-3 3.5z" fill="#000"/><rect x="645.5" y="63.5" width="21.5" height="17.5" rx="2" fill="#3f75c0" stroke="#2a5aa0" stroke-width="1"/><path d="M649.5 67.5h13M649.5 69h13" stroke="#e8f0fa" stroke-width="1"/><path d="M649 72.5h9M649 74.5h13M649 76.5h7" stroke="#e8f0fa" stroke-width="1"/><rect x="677" y="58" width="1" height="30" fill="#cdcdcb"/><rect x="687" y="63" width="20.5" height="1.6" fill="#7a7a7a"/><rect x="688.5" y="64.5" width="18" height="13" fill="#f8f8f8" stroke="#8a8a8a" stroke-width="1"/><path d="M697.5 77.5l-4 5M697.5 77.5l4 5" stroke="#6a6a6a" stroke-width="1"/><path d="M700 67h3.5M700 69h3.5M700 71h3.5M700 73h3.5" stroke="#888" stroke-width=".8"/><path d="M686 64.5l12 6-12 6z" fill="#3f75c0" stroke="#2a5aa0" stroke-width="1"/><rect x="720" y="63" width="20" height="1.6" fill="#7a7a7a"/><rect x="721.5" y="64.5" width="17.5" height="13" fill="#f8f8f8" stroke="#8a8a8a" stroke-width="1"/><path d="M730.5 77.5l-4 5M730.5 77.5l4 5" stroke="#6a6a6a" stroke-width="1"/><path d="M732 67h4M732 69h4M732 71h4M732 73h4" stroke="#888" stroke-width=".8"/><rect x="719" y="65" width="3.8" height="10.5" fill="#6ac020" stroke="#3a8a10" stroke-width="1"/><rect x="725" y="65" width="3.8" height="10.5" fill="#6ac020" stroke="#3a8a10" stroke-width="1"/><rect x="751" y="58" width="1" height="30" fill="#cdcdcb"/><rect x="759.5" y="63" width="22" height="17" rx="1" fill="#fff" stroke="#7a7a7a" stroke-width="1"/><rect x="759.5" y="63" width="22" height="4.5" fill="#7a7a7a"/><path d="M766.8 63v17M774 63v17M759.5 71.5h22M759.5 75.5h22" stroke="#8a8a8a" stroke-width="1"/><path d="M789.5 70h6l-3 3.5z" fill="#000"/><rect x="803.5" y="62.5" width="23" height="18" rx="1.5" fill="#f4f4f4" stroke="#7a7a7a" stroke-width="1"/><defs><linearGradient id="sun" x1="0" y1="0" x2="0" y2="1"><stop offset="0" stop-color="#6a5030"/><stop offset=".5" stop-color="#e89a30"/><stop offset="1" stop-color="#f0b050"/></linearGradient></defs><rect x="806" y="65" width="18" height="13" fill="url(#sun)"/><circle cx="811" cy="77" r="3" fill="#fff0b0"/><path d="M818 78v-6l-3-4M818 72l3-4" stroke="#2a1a10" stroke-width="1" fill="none"/><rect x="838" y="61.5" width="9" height="20.5" fill="#bfd8f0" stroke="#5a5a5a" stroke-width="1.4" stroke-dasharray="1.5 1"/><path d="M849 79.5v-13l8 3v10" fill="none" stroke="#50b020" stroke-width="2.2"/><ellipse cx="847" cy="79" rx="3.5" ry="2.2" fill="#60c030" stroke="#3a8a10" stroke-width=".8"/><ellipse cx="855" cy="80.5" rx="3" ry="2" fill="#60c030" stroke="#3a8a10" stroke-width=".8"/><circle cx="881" cy="72" r="10" fill="#e01818"/><path d="M881 72h10a10 10 0 0 1-6 9.2z" fill="#4a80c0"/><path d="M881 72l4 9.2a10 10 0 0 1-6 .6z" fill="#60b030"/><rect x="902" y="58" width="1" height="30" fill="#cdcdcb"/><rect x="906.5" y="55.5" width="32" height="33.5" rx="3" fill="#d8d8d8" stroke="#b8b8b6" stroke-width="1"/><rect x="911.5" y="61.5" width="21" height="21" fill="#fff" stroke="#111" stroke-width="1.4" stroke-dasharray="2 1.5"/><path d="M915 64.5h14v4h-1.5c-.5-1.5-1-2-2.5-2h-1.3v11.5c0 1 .5 1.5 2 1.5v1.2h-7.4v-1.2c1.5 0 2-.5 2-1.5v-11.5h-1.3c-1.5 0-2 .5-2.5 2h-1.5z" fill="#4a4a4a"/><path d="M951 64.5l4-3.5 4 3.5" fill="none" stroke="#7a7a7a" stroke-width="1"/><rect x="945" y="65" width="20.5" height="14.5" rx="2" fill="#f8f8f8" stroke="#c88a20" stroke-width="2"/><text x="955.2" y="77" font-family="Liberation Sans" font-weight="bold" font-size="10" fill="#6a2a8a" text-anchor="middle">A</text><path d="M977.5 68h6l3 2.5h4.5l3-2.5h5M977.5 76h6l3-2.5h4.5l3 2.5h5" fill="none" stroke="#5a5a5a" stroke-width="1.6"/><rect x="983" y="70" width="11" height="3.8" rx="1.5" fill="#e0e0e0" stroke="#5a5a5a" stroke-width="1"/><rect x="1005.5" y="55.5" width="32" height="33.5" rx="3" fill="#d8d8d8" stroke="#b8b8b6" stroke-width="1"/><rect x="1010.5" y="61.5" width="21.5" height="21" rx="2.5" fill="#8ab4e4" stroke="#3a6ab8" stroke-width="1.2"/><rect x="1013.5" y="64.5" width="5" height="5" fill="#dde8f4" stroke="#2a5aa0" stroke-width="1"/><circle cx="1025" cy="67" r="2.6" fill="#dde8f4" stroke="#2a5aa0" stroke-width="1"/><circle cx="1016" cy="76" r="2.6" fill="#dde8f4" stroke="#2a5aa0" stroke-width="1"/><path d="M1023 73v5.5h5z" fill="#dde8f4" stroke="#2a5aa0" stroke-width="1"/><rect x="1045" y="60.5" width="3" height="2" fill="#a0a0a0"/><rect x="1045" y="63.8" width="3" height="2" fill="#a0a0a0"/><rect x="1045" y="67.1" width="3" height="2" fill="#a0a0a0"/><rect x="1045" y="70.39999999999999" width="3" height="2" fill="#a0a0a0"/><rect x="1045" y="73.69999999999999" width="3" height="2" fill="#a0a0a0"/><rect x="1045" y="76.99999999999999" width="3" height="2" fill="#a0a0a0"/><rect x="1045" y="80.29999999999998" width="3" height="2" fill="#a0a0a0"/><rect x="1045" y="83.59999999999998" width="3" height="2" fill="#a0a0a0"/><rect x="1058.5" y="63.5" width="18" height="14" fill="#fafafa" stroke="#8a8a8a" stroke-width="1"/><path d="M1060.5 66h14" stroke="#c8c8c8" stroke-width="1.5"/><rect x="1060.5" y="69" width="6" height="6" fill="#e6e6e6"/><path d="M1071 71.5h3v3h3v3h-3v3h-3v-3h-3v-3h3z" fill="#60c020" stroke="#2a7a10" stroke-width="1" transform="translate(1.5 1.5)"/><path d="M1088.5 70h6l-3 3.5z" fill="#000"/><path d="M1104.5 61.5h7l2 2v9h-9z" fill="#fafafa" stroke="#7a7a7a" stroke-width="1"/><path d="M1112.5 67.5h7l2 2v13h-9z" fill="#f0f0f0" stroke="#7a7a7a" stroke-width="1"/><path d="M1109 67c-1 4 0 7 4 8l-1-2.5 4.5 3-4.5 2.5 1-2c-5-.5-7-4-6-9z" fill="#4a8ad0" stroke="#2a5aa0" stroke-width=".6"/><rect x="1136.5" y="63.5" width="21" height="15" fill="#fafafa" stroke="#8a8a8a" stroke-width="1"/><path d="M1139 66.5h16" stroke="#cfcfcf" stroke-width="1.5"/><rect x="1139" y="69.5" width="6" height="6" fill="#e6e6e6"/><rect x="1148" y="69.5" width="7" height="3" fill="#e6e6e6"/><rect x="1145" y="74" width="13" height="4.5" fill="#e02020" stroke="#9a1010" stroke-width="1"/><rect x="1168" y="58" width="1" height="30" fill="#cdcdcb"/><rect x="1176.5" y="62.5" width="21" height="15" fill="#fafafa" stroke="#8a8a8a" stroke-width="1"/><path d="M1178.5 65.5h17" stroke="#cfcfcf" stroke-width="1.5"/><rect x="1178" y="68.5" width="6" height="6" fill="#e6e6e6"/><rect x="1187" y="68.5" width="8" height="6" fill="#e6e6e6"/><path d="M1176.5 67.5v15.5h20.5z" fill="#7ac030" stroke="#3a8a10" stroke-width="1"/><path d="M1179.5 75v5h6.5z" fill="#4a9a20"/><path d="M1206.5 70h6l-3 3.5z" fill="#000"/><defs><linearGradient id="bl" x1="0" y1="0" x2="0" y2="1"><stop offset="0" stop-color="#a9c6ea"/><stop offset="1" stop-color="#5b8fd0"/></linearGradient></defs><rect x="2" y="99" width="3" height="2" fill="#a0a0a0"/><rect x="2" y="102.3" width="3" height="2" fill="#a0a0a0"/><rect x="2" y="105.6" width="3" height="2" fill="#a0a0a0"/><rect x="2" y="108.89999999999999" width="3" height="2" fill="#a0a0a0"/><rect x="2" y="112.19999999999999" width="3" height="2" fill="#a0a0a0"/><rect x="2" y="115.49999999999999" width="3" height="2" fill="#a0a0a0"/><rect x="2" y="118.79999999999998" width="3" height="2" fill="#a0a0a0"/><rect x="2" y="122.09999999999998" width="3" height="2" fill="#a0a0a0"/><rect x="12.5" y="94.5" width="32" height="34" rx="3" fill="#d9d9d8" stroke="#b8b8b6" stroke-width="1"/><path d="M22.5 101.5v16l3.8-3.3 3 6 2.6-1.3-3-5.8h5.2z" fill="#fff" stroke="#6a6a6a" stroke-width="1.1" stroke-linejoin="round"/><ellipse cx="60" cy="121" rx="8" ry="2" fill="rgba(0,0,0,.12)"/><path d="M65 114l6 6" stroke="#555" stroke-width="3.2" stroke-linecap="round"/><circle cx="58.8" cy="107.8" r="8.2" fill="#c8d8ea" stroke="#8a8a8a" stroke-width="1.3"/><path d="M53 113.5l11.5-11.5" stroke="#777" stroke-width="1.1"/><path d="M52.5 104.5h5M55 102v5M59 110.5h5" stroke="#4a4a4a" stroke-width="1.1"/><rect x="82" y="97" width="1" height="29" fill="#cdcdcb"/><path d="M92 105.5c3-2 6 0 9-1s6-2 9 0M92 109.5c3-2 6 0 9-1s6-2 9 0" fill="none" stroke="#3465a4" stroke-width="1.3"/><path d="M92 113c3-1.5 6 0 9-.8s6-1.5 9 0" fill="none" stroke="#3465a4" stroke-width="1" stroke-dasharray="1.5 1.5"/><rect x="89" y="117" width="24" height="6" fill="#3465a4"/><path d="M120.5 108.5h6l-3 3.5z" fill="#000"/><rect x="133" y="117" width="24" height="6" fill="#72a0d4"/><path d="M136 107h3v8h-3z" fill="#3a70c0"/><path d="M138.5 109l8-5 7 9-6.5 4.5h-5z" fill="#fff" stroke="#7a7a7a" stroke-width="1"/><path d="M145 103c0-3 4-3 4 0v6" fill="none" stroke="#7a7a7a" stroke-width="1"/><rect x="144" y="108" width="3" height="3" transform="rotate(45 145.5 109.5)" fill="none" stroke="#8a8a8a" stroke-width=".8"/><path d="M164.5 108.5h6l-3 3.5z" fill="#000"/><rect x="178" y="97" width="1" height="29" fill="#cdcdcb"/><path d="M188 101.2l20 19.5" stroke="#3a70c0" stroke-width="1.2"/><rect x="221" y="118" width="21" height="3" fill="rgba(0,0,0,.08)"/><rect x="220.75" y="104.75" width="20.5" height="12.5" fill="url(#bl)" stroke="#284f90" stroke-width="1.5"/><ellipse cx="264" cy="120" rx="11" ry="2" fill="rgba(0,0,0,.08)"/><ellipse cx="264" cy="110.8" rx="10.5" ry="7.5" fill="url(#bl)" stroke="#284f90" stroke-width="1.3"/><rect x="285" y="97" width="1" height="29" fill="#cdcdcb"/><path d="M294 110.3h16" stroke="#3a70c0" stroke-width="1.4"/><path d="M310 107.5l5 2.8-5 2.8z" fill="#3a70c0"/><path d="M323.5 108.5h6l-3 3.5z" fill="#000"/><path d="M340 118.5c5-2 10-3 16-1" fill="none" stroke="#3a3a3a" stroke-width="1"/><path d="M339 118.7l2-5 12.5-12.5 3 3-12.5 12.5z" fill="#f0a030" stroke="#9a5a10" stroke-width=".9"/><path d="M353.5 101.2l1.6-1.3 3 3-1.3 1.6z" fill="#e82020"/><path d="M339 118.7l.8-2.3 1.5 1.5z" fill="#222"/><path d="M367.5 108.5h6l-3 3.5z" fill="#000"/><path d="M385 103.7h6.5v14.2h7.5" fill="none" stroke="#3a78c0" stroke-width="1.2"/><circle cx="385" cy="103.7" r="1.9" fill="#3a78c0"/><circle cx="399" cy="117.9" r="1.9" fill="#3a78c0"/><path d="M411.5 108.5h6l-3 3.5z" fill="#000"/><rect x="425" y="97" width="1" height="29" fill="#cdcdcb"/><ellipse cx="444" cy="122" rx="9" ry="1.6" fill="rgba(0,0,0,.1)"/><path d="M444 100.3l10.7 10.5-10.7 10.7-10.7-10.7z" fill="url(#bl)" stroke="#284f90" stroke-width="1.3"/><path d="M463.5 108.5h6l-3 3.5z" fill="#000"/><ellipse cx="488" cy="122" rx="9" ry="1.6" fill="rgba(0,0,0,.1)"/><circle cx="488" cy="110.8" r="10.5" fill="url(#bl)" stroke="#284f90" stroke-width="1.3"/><circle cx="484" cy="107.5" r="1" fill="#284f90"/><circle cx="491.5" cy="107.5" r="1" fill="#284f90"/><path d="M482.5 113.5c2 3.5 8 3.5 10.5 0" fill="none" stroke="#284f90" stroke-width="1.1"/><path d="M507.5 108.5h6l-3 3.5z" fill="#000"/><path d="M521.5 110.8l6-6.5v3.7h9.5v-3.7l6 6.5-6 6.5v-3.7h-9.5v3.7z" fill="url(#bl)" stroke="#284f90" stroke-width="1.2"/><path d="M551.5 108.5h6l-3 3.5z" fill="#000"/><rect x="565.5" y="100.5" width="21.5" height="21" fill="url(#bl)" stroke="#284f90" stroke-width="1.2"/><path d="M571.3 100.5v21M565.5 106.6h21.5" stroke="#284f90" stroke-width="1.1"/><path d="M595.5 108.5h6l-3 3.5z" fill="#000"/><path d="M611.5 100.5h17.5a2 2 0 0 1 2 2v11a2 2 0 0 1-2 2h-10.5l-9 6 5-6h-3a2 2 0 0 1-2-2v-11a2 2 0 0 1 2-2z" fill="url(#bl)" stroke="#284f90" stroke-width="1.2"/><path d="M639.5 108.5h6l-3 3.5z" fill="#000"/><path d="M664 100.5l2.9 8h8l-6.4 4.8 2.4 8-6.9-4.8-6.9 4.8 2.4-8-6.4-4.8h8z" fill="url(#bl)" stroke="#284f90" stroke-width="1.2" stroke-linejoin="round"/><path d="M683.5 108.5h6l-3 3.5z" fill="#000"/><defs><linearGradient id="cb" x1="1" y1="1" x2="0" y2="0"><stop offset="0" stop-color="#dfe8f4"/><stop offset=".35" stop-color="#4a82c4"/><stop offset="1" stop-color="#3a74bc"/></linearGradient></defs><path d="M698 103.5l3-2.8h17v17l-3 2.8h-17z" fill="url(#cb)"/><path d="M698 103.5h17v17M715 103.5l3-2.8" fill="none" stroke="#6a9ad0" stroke-width=".7"/><path d="M727.5 108.5h6l-3 3.5z" fill="#000"/><rect x="741" y="97" width="1" height="29" fill="#cdcdcb"/><path d="M759.8 119.5A8.2 8.2 0 1 1 768.6 109.5" fill="none" stroke="#70307f" stroke-width="4.6"/><path d="M759.8 119.5A8.2 8.2 0 1 1 768.6 109.5" fill="none" stroke="#a478b4" stroke-width="2.2"/><path d="M763.5 109.5h10.5l-5.2 6.2z" fill="#8a4a9a" stroke="#70307f" stroke-width=".8"/><path d="M782.5 102v16.5" stroke="#cfcfcf" stroke-width="1"/><g fill="#dadada" stroke="#c4c4c4" stroke-width="1"><rect x="784.5" y="102.5" width="9" height="3.5" rx="1"/><rect x="784.5" y="108.5" width="19" height="3.5" rx="1"/><rect x="784.5" y="114.5" width="11" height="3.5" rx="1"/></g><path d="M812.5 108.5h6l-3 3.5z" fill="#a8a8a8"/><rect x="836.5" y="100.5" width="11" height="11" fill="#f0f0f0" stroke="#d0d0d0"/><rect x="826.5" y="112" width="11" height="9" fill="#f0f0f0" stroke="#d0d0d0"/><rect x="829.5" y="104.5" width="14" height="13" fill="#c8c8c8" stroke="#b4b4b4"/><path d="M856.5 108.5h6l-3 3.5z" fill="#a8a8a8"/><path d="M876 104.5h13M876 104.5l2-2M876 104.5l2 2M889 104.5l-2-2M889 104.5l-2 2" stroke="#c4c4c4" stroke-width=".8" fill="none"/><rect x="872.5" y="107.5" width="6" height="10" fill="#f0f0f0" stroke="#c8c8c8"/><rect x="885.5" y="106.5" width="6" height="13" fill="#f0f0f0" stroke="#c8c8c8"/><path d="M875.5 117.5v3M888.5 119.5v2" stroke="#c8c8c8"/><rect x="903" y="97" width="1" height="29" fill="#cdcdcb"/><path d="M916 116.5h16.5v-13.5" fill="none" stroke="#e8b86a" stroke-width="2"/><rect x="913.5" y="103.5" width="16" height="11" fill="#fff" stroke="#6e6e6e" stroke-width="1.4"/><path d="M948.5 101v16.5h16.5M946 104.5h16.5v16.5" fill="none" stroke="#d4d4d4" stroke-width="2"/><path d="M949 105.5h12M949 116.5h12" stroke="#d4d4d4" stroke-dasharray="1 1.2" stroke-width="1"/><path d="M985 108l13 13" stroke="#c8c8c8" stroke-width="2.2" stroke-linecap="round"/><path d="M980.5 105l1 2.2 2.4.2-1.8 1.6.6 2.4-2.2-1.3-2.2 1.3.6-2.4-1.8-1.6 2.4-.2zM988.5 99.5l.7 1.5 1.6.2-1.2 1 .4 1.6-1.5-.8-1.5.8.4-1.6-1.2-1 1.6-.2z" fill="none" stroke="#d6d6d6" stroke-width=".7"/><path d="M1007.5 108.5h6l-3 3.5z" fill="#a8a8a8"/><rect x="1021" y="97" width="1" height="29" fill="#cdcdcb"/><path d="M1033 101.5l8.5 10" stroke="#666" stroke-width="1"/><circle cx="1033" cy="102" r="1.6" fill="#fff" stroke="#555" stroke-width=".9"/><path d="M1039 106c0-5 3-7 5.5-7s5 2 5 5" fill="none" stroke="#666" stroke-width="1"/><rect x="1048" y="103" width="3" height="3" fill="#3a78c8"/><rect x="1038.5" y="108" width="3" height="3" fill="#3a78c8"/><rect x="1032.5" y="118" width="3" height="3" fill="#3a78c8"/><path d="M1035 119.5h4" stroke="#666" stroke-width=".9"/><path d="M1042 121l1-3.5 7.5-7.5 2.5 2.5-7.5 7.5z" fill="#f0c080" stroke="#d8a060" stroke-width=".6"/><path d="M1064 121.5l3-6.5 3.5 3.5z" fill="#d8d8d8" stroke="#7a7a7a" stroke-width=".9"/><path d="M1067 115l10.5-10.5 5-2.5 3.5 3.5-2.5 5-10.5 10.5z" fill="#f4e040" stroke="#9a8a10" stroke-width="1"/><path d="M1077.5 104.5l1-3.5 7 7-3.5 1z" fill="#e8c820" stroke="#9a8a10" stroke-width=".8"/><path d="M1099.5 104a2 2 0 0 1 2-2h13.5a2 2 0 0 1 2 2v16.5h-17.5z" fill="#e0e0e0" stroke="#cfcfcf" stroke-width="1"/><rect x="1100" y="107" width="16.5" height="13" fill="#cacaca"/><path d="M1096.5 114.5h6l-2-2.5M1102.5 114.5l-2 2.5" fill="none" stroke="#e4e4e4" stroke-width="2"/></svg>
<svg style="left:0;top:0" width="1440" height="440"><path d="M1413 184.5c-1.5-1.5-1.5-4 0-5.5l2.5 2.5 2-2-2.5-2.5c1.5-1.5 4-1.5 5.5 0s1.5 3.5.7 5l7.5 7.5c1.5-.8 3.5-.5 5 .7s1.5 4 0 5.5l-2.5-2.5-2 2 2.5 2.5c-1.5 1.5-4 1.5-5.5 0s-1.5-3.5-.7-5l-7.5-7.5c-1.5.8-3.5.5-5-.7z" fill="#fafafa" stroke="#7a7a7a" stroke-width="1"/><rect x="1409.5" y="217.5" width="9" height="15" fill="#fafafa" stroke="#8a8a8a"/><path d="M1411 221h6M1411 224h6M1411 227h6" stroke="#8a8a8a"/><defs><linearGradient id="pf" x1="0" y1="0" x2="1" y2="0"><stop offset="0" stop-color="#6a3a7a"/><stop offset=".7" stop-color="#8a5a9a"/><stop offset="1" stop-color="#8a5a9a" stop-opacity="0"/></linearGradient></defs><rect x="1417" y="216" width="14" height="18" fill="url(#pf)"/><rect x="1419.5" y="219" width="11" height="4" fill="none" stroke="#e8d8f0" stroke-width=".9"/><path d="M1419.5 226h11" stroke="#e8d8f0" stroke-width=".9"/><path d="M1418.5 250.5l3 6.3 6.8 1-5 4.8 1.2 6.8-6-3.3-6 3.3 1.2-6.8-5-4.8 6.8-1z" fill="#f4e040" stroke="#c8a010" stroke-width="1.1" stroke-linejoin="round"/><path d="M1426 253h5M1427 256h4M1428 263h3M1428 266h3M1427 269h4" stroke="#d8b830" stroke-width=".9"/><rect x="1409.5" y="285.5" width="21.5" height="17.5" rx="2" fill="#3f75c0" stroke="#2a5aa0"/><path d="M1413 289.5h14M1413 291h14M1413 294.5h10M1413 296.5h14M1413 298.5h8" stroke="#e8f0fa" stroke-width=".9"/><path d="M1413 320h16v4h-1c-.5-1-1-1.5-2-1.5h-2.5v16h-5v-16h-2.5c-1 0-1.5.5-2 1.5h-1z" fill="#3a3a3a"/><path d="M1408.5 328v13.5h20z" fill="#7ac030" stroke="#3a8a10" stroke-width="1"/><path d="M1411.5 334.5v4h5z" fill="#4a9a20"/><path d="M1416.5 358.5l3.5-3.5 3.5 3.5" fill="none" stroke="#7a7a7a"/><rect x="1409.5" y="358.5" width="21" height="14.5" rx="2" fill="#e0a020" stroke="#a87010"/><rect x="1412" y="361" width="16" height="9.5" fill="url(#sun)"/><path d="M1424 370v-5l-2-3M1424 365l2.5-3" stroke="#2a1a10" stroke-width=".9" fill="none"/><circle cx="1416" cy="370" r="2" fill="#fff0b0"/><circle cx="1420" cy="400" r="10" fill="#fafafa" stroke="#8a8a8a" stroke-width="1.2"/><circle cx="1420" cy="400" r="8" fill="none" stroke="#c8c8c8" stroke-width=".8"/><path d="M1415 394l6.5 4.5-1.5 1.5z" fill="#e03030"/><path d="M1425 406l-6.5-4.5 1.5-1.5z" fill="#4a70b0"/></svg>
</body></html>
